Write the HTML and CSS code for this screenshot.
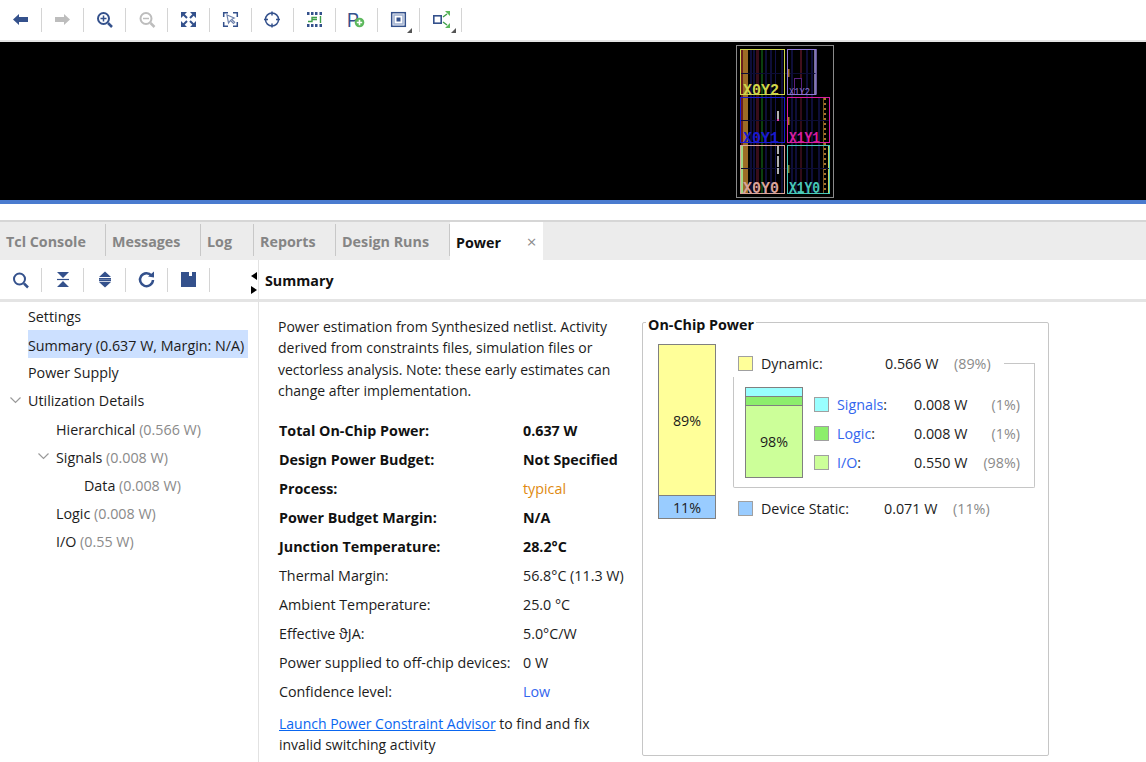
FILE: index.html
```html
<!DOCTYPE html>
<html lang="en">
<head>
  <meta charset="UTF-8">
  <title>Power</title>
  <link rel="stylesheet" href="styles.css">
</head>
<body>
  <div class="toolbar">
    <div class="tool"><svg viewBox="0 0 24 24"><polygon class="navy" points="4,11.5 10,6 10,9 19,9 19,14 10,14 10,17"/></svg></div>
    <div class="tool"><svg viewBox="0 0 24 24"><polygon class="off" points="19,11.5 13,6 13,9 4,9 4,14 13,14 13,17"/></svg></div>
    <div class="tool"><svg viewBox="0 0 24 24"><circle class="line" cx="10.5" cy="10.5" r="5.5" stroke-width="2"/><path class="line" stroke-width="1.5" d="M7.5 10.5h6M10.5 7.5v6"/><path class="line" stroke-width="2.5" d="M15 15l4 4"/></svg></div>
    <div class="tool"><svg viewBox="0 0 24 24"><circle class="line-off" cx="11" cy="10.5" r="5.5" stroke-width="2"/><path class="line-off" stroke-width="1.5" d="M8 10.5h6"/><path class="line-off" stroke-width="2.5" d="M15.5 15l4 4"/></svg></div>
    <div class="tool"><svg viewBox="0 0 24 24"><path class="navy" d="M4 4h6L4 10zM19 4v6L13 4zM4 19v-6l6 6zM19 19h-6l6-6z"/><path class="line" stroke-width="2" d="M6 6l4 4M17 6l-4 4M6 17l4-4M17 17l-4-4"/></svg></div>
    <div class="tool"><svg viewBox="0 0 24 24"><path class="line" stroke-width="1.5" d="M4.7 9V4.7H9M14 4.7h4.3V9M4.7 14v4.3H9M18.3 14v4.3H14"/><path class="line-soft" stroke-width="1.2" d="M8 7l1.5 8 2-2.5 3 3 1.2-1.2-3-3 2.5-1.3z"/></svg></div>
    <div class="tool"><svg viewBox="0 0 24 24"><circle class="line" cx="11" cy="11.5" r="6.5" stroke-width="1.5"/><path class="line" stroke-width="1.5" d="M11 3.5v4M11 15.5v4M3 11.5h4M15 11.5h4"/></svg></div>
    <div class="tool"><svg viewBox="0 0 24 24"><path class="navy" d="M4 4h2.5v3H4zM8 4h2.5v3H8zM12 4h2.5v3H12zM16.5 4H19v3h-2.5zM4 16h2.5v3H4zM8 16h2.5v3H8zM12 16h2.5v3H12zM16.5 16H19v3h-2.5z"/><path class="wire" d="M5 13.5h4v-4h5M9 11.5h5M17.5 8v7"/></svg></div>
    <div class="tool"><svg viewBox="0 0 24 24"><text class="icon-letter" x="2" y="19" textLength="12" lengthAdjust="spacingAndGlyphs">P</text><circle class="green" cx="14.5" cy="14.5" r="4.8"/><path class="plus" d="M11.8 14.5h5.4M14.5 11.8v5.4"/></svg></div>
    <div class="tool"><svg viewBox="0 0 24 24"><rect class="line" x="4.7" y="4.7" width="13.6" height="13.6" stroke-width="1.5"/><rect class="line-pale" x="7" y="7" width="9" height="9" stroke-width="1.5"/><rect class="navy" x="9.5" y="9.5" width="4" height="4"/><polygon class="corner" points="20,25 25,25 25,20"/></svg></div>
    <div class="tool"><svg viewBox="0 0 24 24"><rect class="line" x="4.8" y="7.8" width="7.4" height="7.4" stroke-width="1.6"/><path class="wire" d="M14 9l4-3M14 14l4 3"/><path class="green" d="M16 3h5v5zM16 20h5v-5z"/><polygon class="corner" points="22,25 27,25 27,20"/></svg></div>
  </div>

  <div class="device-view">
    <svg class="device" viewBox="736 45 98 153">
      <rect class="device-edge" x="736.5" y="45.5" width="97" height="152"/>
      <g class="stripes">
        <rect x="741" y="49" width="2" height="96" fill="#6a1c1c"/>
        <rect x="741" y="145" width="2" height="49" fill="#a0d884"/>
        <rect x="743" y="49" width="5" height="145" fill="#9c6c26"/>
        <rect x="750" y="49" width="2" height="145" fill="#0e0e38"/>
        <rect x="753" y="49" width="2" height="145" fill="#0e0e38"/>
        <rect x="756" y="49" width="3" height="145" fill="#380d19"/>
        <rect x="761" y="49" width="2" height="145" fill="#0b3f0e"/>
        <rect x="765" y="49" width="2" height="145" fill="#0e0e38"/>
        <rect x="770" y="49" width="2" height="145" fill="#0e0e38"/>
        <rect x="775" y="49" width="1" height="145" fill="#12124a"/>
        <rect x="781" y="49" width="2" height="145" fill="#0e0e38"/>
        <rect x="791" y="49" width="2" height="145" fill="#0e0e38"/>
        <rect x="795" y="97" width="2" height="97" fill="#0e0e38"/>
        <rect x="800" y="49" width="2" height="29" fill="#42101d"/>
        <rect x="800" y="97" width="2" height="97" fill="#320c18"/>
        <rect x="806" y="49" width="2" height="145" fill="#0e0e38"/>
        <rect x="811" y="49" width="2" height="145" fill="#0e0e38"/>
        <rect x="818" y="97" width="2" height="97" fill="#0e0e38"/>
        <rect x="823" y="98" width="1" height="95" fill="#7a5820"/>
        <line class="device-dots" x1="825" y1="98" x2="825" y2="193"/>
        <rect x="828" y="146" width="1" height="47" fill="#c8d860"/>
        <rect x="814" y="49" width="2.5" height="45" fill="#777099"/>
        <rect x="740" y="73" width="76" height="1" fill="#0c0c34"/>
        <rect x="740" y="120" width="90" height="1" fill="#0c0c34"/>
        <rect x="740" y="168" width="90" height="1" fill="#0c0c34"/>
        <rect x="788" y="69" width="1.5" height="8" fill="#a8752a"/>
        <rect x="788" y="117" width="1.5" height="8" fill="#a8752a"/>
        <rect x="788" y="165" width="1.5" height="8" fill="#7d8030"/>
        <rect x="794.5" y="78.5" width="7" height="16" fill="#000" stroke="#5a2280"/>
        <rect x="777" y="111" width="2" height="9" fill="#b0b0b0"/>
        <rect x="777" y="119" width="2" height="2" fill="#e040a0"/>
        <rect x="777" y="146" width="2" height="8" fill="#b0b0b0"/>
        <rect x="777" y="156" width="2" height="11" fill="#b0b0b0"/>
        <rect x="777" y="168" width="2" height="6" fill="#b0b0b0"/>
      </g>
      <rect class="clock-region" x="740.5" y="49.5" width="44" height="45" stroke="#cfd64a"/>
      <rect class="clock-region" x="787.5" y="49.5" width="28.5" height="45" stroke="#8f78d8"/>
      <rect class="clock-region" x="740.5" y="97.5" width="44" height="45" stroke="#1a1ad0"/>
      <rect class="clock-region" x="787.5" y="97.5" width="42" height="45" stroke="#d81ca0"/>
      <rect class="clock-region" x="740.5" y="145.5" width="44" height="48" stroke="#d9a49a"/>
      <rect class="clock-region" x="787.5" y="145.5" width="42" height="48" stroke="#48c8b8"/>
      <text class="clock-label" x="743" y="94.5" textLength="36" lengthAdjust="spacingAndGlyphs" fill="#cfd64a">X0Y2</text>
      <text class="clock-label small" x="789" y="95" textLength="21" lengthAdjust="spacingAndGlyphs" fill="#8f78d8">X1Y2</text>
      <text class="clock-label" x="743" y="143" textLength="36" lengthAdjust="spacingAndGlyphs" fill="#1a1ad0">X0Y1</text>
      <text class="clock-label" x="789" y="143" textLength="31" lengthAdjust="spacingAndGlyphs" fill="#d81ca0">X1Y1</text>
      <text class="clock-label" x="743" y="192.5" textLength="36" lengthAdjust="spacingAndGlyphs" fill="#d9a49a">X0Y0</text>
      <text class="clock-label" x="789" y="192.5" textLength="31" lengthAdjust="spacingAndGlyphs" fill="#48c8b8">X1Y0</text>
    </svg>
  </div>

  <div class="tabs">
    <div class="tab">Tcl Console</div>
    <div class="tab">Messages</div>
    <div class="tab">Log</div>
    <div class="tab">Reports</div>
    <div class="tab">Design Runs</div>
    <div class="tab tab-active">Power <span class="tab-close">×</span></div>
  </div>

  <div class="panel">
    <div class="side">
      <div class="subbar">
        <div class="tool"><svg viewBox="0 0 24 24"><circle class="line" cx="10.5" cy="11" r="5.5" stroke-width="2"/><path class="line" stroke-width="2.5" d="M15 15.5l4 4"/></svg></div>
        <div class="tool"><svg viewBox="0 0 24 24"><path class="navy" d="M6 4h12l-6 6zM12 13l6 6H6z"/><path class="line" stroke-width="1.2" d="M6 11.5h12"/></svg></div>
        <div class="tool"><svg viewBox="0 0 24 24"><path class="navy" d="M12 3.5l6 5.5H6zM6 14h12l-6 5.5z"/><path class="line" stroke-width="1.4" d="M6 10.7h12M6 12.5h12"/></svg></div>
        <div class="tool"><svg viewBox="0 0 24 24"><path class="line" stroke-width="2.5" d="M16.5 7.5a6.5 6.5 0 1 0 1.5 4.5"/><polygon class="navy" points="13,8.5 19,3.5 19,9.5"/></svg></div>
        <div class="tool"><svg viewBox="0 0 24 24"><path class="navy" d="M4 4h15v15H4zM12 4v4h3V4z" fill-rule="evenodd"/></svg></div>
        <span class="splitter"><i class="split-left"></i><i class="split-right"></i></span>
      </div>
      <ul class="tree">
        <li class="node"><span class="node-text">Settings</span></li>
        <li class="node"><span class="node-text node-selected">Summary (0.637 W, Margin: N/A)</span></li>
        <li class="node"><span class="node-text">Power Supply</span></li>
        <li class="node"><svg class="chevron" viewBox="0 0 18 28"><path d="M0.5 11.5l5 5 5-5"/></svg><span class="node-text">Utilization Details</span></li>
        <li class="node level-1"><span class="node-text">Hierarchical <em>(0.566 W)</em></span></li>
        <li class="node level-1"><svg class="chevron" viewBox="0 0 18 28"><path d="M0.5 11.5l5 5 5-5"/></svg><span class="node-text">Signals <em>(0.008 W)</em></span></li>
        <li class="node level-2"><span class="node-text">Data <em>(0.008 W)</em></span></li>
        <li class="node level-1"><span class="node-text">Logic <em>(0.008 W)</em></span></li>
        <li class="node level-1"><span class="node-text">I/O <em>(0.55 W)</em></span></li>
      </ul>
    </div>

    <div class="main">
      <h2 class="main-title">Summary</h2>
      <div class="content">
        <div class="details">
          <p class="intro">Power estimation from Synthesized netlist. Activity<br>derived from constraints files, simulation files or<br>vectorless analysis. Note: these early estimates can<br>change after implementation.</p>
          <dl class="facts">
            <dt class="strong">Total On-Chip Power:</dt><dd class="strong">0.637 W</dd>
            <dt class="strong">Design Power Budget:</dt><dd class="strong">Not Specified</dd>
            <dt class="strong">Process:</dt><dd class="orange">typical</dd>
            <dt class="strong">Power Budget Margin:</dt><dd class="strong">N/A</dd>
            <dt class="strong">Junction Temperature:</dt><dd class="strong">28.2°C</dd>
            <dt>Thermal Margin:</dt><dd>56.8°C (11.3 W)</dd>
            <dt>Ambient Temperature:</dt><dd>25.0 °C</dd>
            <dt>Effective ϑJA:</dt><dd>5.0°C/W</dd>
            <dt>Power supplied to off-chip devices:</dt><dd>0 W</dd>
            <dt>Confidence level:</dt><dd class="blue">Low</dd>
          </dl>
          <p class="advisor"><a href="#">Launch Power Constraint Advisor</a> to find and fix<br>invalid switching activity</p>
        </div>

        <section class="onchip">
          <div class="onchip-title">On-Chip Power</div>
          <div class="onchip-body">
            <div class="bar bar-total">
              <div class="seg seg-dynamic">89%</div>
              <div class="seg seg-static">11%</div>
            </div>
            <div class="legend">
              <div class="row">
                <span class="swatch seg-dynamic"></span><span class="name">Dynamic:</span><span class="val">0.566 W</span><span class="pct">(89%)</span>
              </div>
              <div class="group">
                <div class="bar bar-dynamic">
                  <div class="seg seg-signals"></div>
                  <div class="seg seg-logic"></div>
                  <div class="seg seg-io">98%</div>
                </div>
                <div class="group-rows">
                  <div class="row">
                    <span class="swatch seg-signals"></span><span class="name name-sub"><a class="plain" href="#">Signals</a>:</span><span class="val val-sub">0.008 W</span><span class="pct pct-sub">(1%)</span>
                  </div>
                  <div class="row">
                    <span class="swatch seg-logic"></span><span class="name name-sub"><a class="plain" href="#">Logic</a>:</span><span class="val val-sub">0.008 W</span><span class="pct pct-sub">(1%)</span>
                  </div>
                  <div class="row">
                    <span class="swatch seg-io"></span><span class="name name-sub"><a class="plain" href="#">I/O</a>:</span><span class="val val-sub">0.550 W</span><span class="pct pct-sub">(98%)</span>
                  </div>
                </div>
              </div>
              <div class="row row-static">
                <span class="swatch seg-static"></span><span class="name name-static">Device Static:</span><span class="val">0.071 W</span><span class="pct">(11%)</span>
              </div>
            </div>
          </div>
        </section>
      </div>
    </div>
  </div>
</body>
</html>
```

FILE: styles.css
```css
body {
  font-family: "Open Sans", "Noto Sans", sans-serif;
  font-size: 14.3px;
  color: #1c1c1c;
  background-color: #fff;
  margin: 0;
  width: 1146px;
  height: 762px;
  overflow: hidden;
}

svg {
  overflow: visible;
}

/* icon paints */
.navy { fill: #34518c; }
.off { fill: #bdbdbd; }
.green { fill: #5cb85c; }
.corner { fill: #555; }
.line { fill: none; stroke: #34518c; }
.line-off { fill: none; stroke: #bdbdbd; }
.line-soft { fill: #fff; stroke: #6f83ad; }
.line-pale { fill: #fff; stroke: #9fb0d0; }
.wire { fill: none; stroke: #3f9d4a; stroke-width: 1.4; }
.plus { fill: none; stroke: #fff; stroke-width: 1.6; }
.icon-letter {
  font-family: "Liberation Sans", sans-serif;
  font-size: 21px;
  fill: #34518c;
}

/* top toolbar */
.toolbar {
  display: flex;
  height: 40px;
  align-items: center;
  border-bottom: 2px solid #e4e4e4;
}

.tool {
  width: 42px;
  height: 24px;
  box-sizing: border-box;
  padding-left: 9px;
  border-right: 1px solid #d4d4d4;
  flex: none;
}

.tool svg {
  display: block;
  width: 24px;
  height: 24px;
}

/* device */
.device-view {
  height: 155px;
  background-color: #000;
  border-bottom: 4px solid #4a7bcf;
  padding-left: 736px;
  padding-top: 3px;
}

.device {
  display: block;
  width: 98px;
  height: 153px;
}

.device-edge {
  fill: none;
  stroke: #8a8a8a;
}

.device-dots {
  stroke: #a8752a;
  stroke-width: 2;
  stroke-dasharray: 2 3;
}

.clock-region {
  fill: none;
  stroke-width: 1;
}

.clock-label {
  font-family: "Liberation Mono", monospace;
  font-size: 16px;
  font-weight: 700;
}

.clock-label.small {
  font-size: 10px;
  font-weight: 400;
}

/* tabs */
.tabs {
  display: grid;
  grid-template-columns: 106px 95px 53px 82px 114px 93px;
  height: 38px;
  margin-top: 16px;
  border-top: 2px solid #d6d6d6;
  background-color: #ececec;
}

.tab {
  font-weight: 700;
  color: #858585;
  padding-left: 6px;
  white-space: nowrap;
  border-right: 1px solid #c8c8c8;
  height: 32px;
  margin-top: 2px;
  line-height: 36px;
}

.tab-active {
  background-color: #fff;
  color: #111;
  border-right: none;
  height: 38px;
  margin-top: 0;
  line-height: 40px;
}

.tab-close {
  font-weight: 400;
  font-size: 17px;
  color: #8c8c8c;
  margin-left: 22px;
}

/* panel */
.panel {
  display: flex;
  height: 502px;
}

.side {
  width: 258px;
  flex: none;
  border-right: 1px solid #e2e2e2;
}

.subbar {
  display: flex;
  align-items: center;
  height: 39px;
  border-bottom: 3px solid #e4e4e4;
  position: relative;
}

.splitter i {
  position: absolute;
  left: 251px;
  width: 0;
  height: 0;
  border-top: 4.5px solid transparent;
  border-bottom: 4.5px solid transparent;
}

.split-left {
  top: 12px;
  border-right: 6px solid #000;
}

.split-right {
  top: 26px;
  border-left: 6px solid #000;
}

.tree {
  list-style: none;
  margin: 0;
  padding: 0;
}

.node {
  display: flex;
  align-items: center;
  height: 28px;
  padding-left: 28px;
}

.level-1 { padding-left: 56px; }
.level-2 { padding-left: 84px; }

.chevron {
  width: 18px;
  height: 28px;
  margin-left: -18px;
  flex: none;
}

.chevron path {
  fill: none;
  stroke: #9a9a9a;
  stroke-width: 1.2;
}

.node-text {
  white-space: nowrap;
  height: 28px;
  line-height: 29px;
}

.level-1 .node-text,
.level-2 .node-text {
  line-height: 32px;
}

.node-text em {
  font-style: normal;
  color: #8a8a8a;
}

.node-selected {
  width: 220px;
  line-height: 31px;
  background-color: #cce0ff;
}

.main {
  flex: 1;
  min-width: 0;
}

.main-title {
  margin: 0;
  height: 39px;
  line-height: 41px;
  padding-left: 6px;
  font-size: 14.3px;
  font-weight: 700;
  color: #111;
  border-bottom: 3px solid #e4e4e4;
}

.content {
  display: flex;
}

.details {
  width: 383px;
  flex: none;
  box-sizing: border-box;
  padding: 14px 0 0 19px;
}

.intro {
  margin: 0;
  font-size: 14px;
  line-height: 21.3px;
}

.facts {
  display: grid;
  grid-template-columns: 244px 1fr;
  grid-auto-rows: 29px;
  align-items: center;
  margin: 15px 0 0 1px;
  white-space: nowrap;
}

.facts dd {
  margin: 0;
}

.strong {
  font-weight: 700;
  color: #111;
}

.orange { color: #e08a10; }
.blue { color: #3366ee; }

.advisor {
  margin: 7px 0 0 1px;
  font-size: 14px;
  line-height: 21px;
}

.advisor a {
  color: #0a66f0;
}

/* on-chip power box */
.onchip {
  width: 407px;
  height: 434px;
  box-sizing: border-box;
  margin-top: 20px;
  border: 1px solid #c6c6c6;
  border-radius: 2px;
}

.onchip-title {
  width: max-content;
  margin: -7px 0 0 3px;
  padding: 0 2px;
  height: 18px;
  line-height: 18px;
  font-weight: 700;
  color: #111;
  background-color: #fff;
}

.onchip-body {
  display: flex;
  padding: 10px 0 0 15px;
}

.bar {
  width: 58px;
  box-sizing: border-box;
  border: 1px solid #808080;
  display: flex;
  flex-direction: column;
  flex: none;
}

.bar-total {
  height: 175px;
}

.seg {
  display: flex;
  align-items: center;
  justify-content: center;
}

.bar-total .seg-dynamic {
  height: 150px;
}

.bar-total .seg-static {
  flex: 1;
  border-top: 1px solid #808080;
}

.seg-dynamic { background-color: #ffff99; }
.seg-static { background-color: #99ccff; }
.seg-signals { background-color: #99ffff; }
.seg-logic { background-color: #8cee6c; }
.seg-io { background-color: #ccff99; }

.legend {
  margin: 5px 0 0 22px;
  width: 297px;
}

.row {
  display: flex;
  align-items: center;
  height: 29px;
  white-space: nowrap;
}

.swatch {
  width: 15px;
  height: 15px;
  box-sizing: border-box;
  border: 1px solid #a0a0a0;
  flex: none;
  margin-right: 8px;
}

.name { width: 124px; }
.name-static { width: 123px; }
.name-sub { width: 77px; }
.val { width: 69px; }
.val-sub { width: 53px; }
.pct { color: #8a8a8a; }

.pct-sub {
  width: 53px;
  text-align: right;
}

.plain {
  color: #3366ee;
  text-decoration: none;
}

.group {
  display: flex;
  position: relative;
  margin: -1px 0 0 -5px;
  width: 302px;
  box-sizing: border-box;
  height: 111px;
  padding: 10px 0 0 11px;
  border: 1px solid #c6c6c6;
  border-top: none;
  border-radius: 0 0 2px 2px;
}

/* connector from the Dynamic row down into the box */
.group::before {
  content: "";
  position: absolute;
  right: -1px;
  top: -14px;
  width: 30px;
  height: 14px;
  border-top: 1px solid #c6c6c6;
  border-right: 1px solid #c6c6c6;
}

.bar-dynamic {
  height: 91px;
}

.bar-dynamic .seg-signals {
  height: 8px;
  border-bottom: 1px solid #808080;
}

.bar-dynamic .seg-logic {
  height: 8px;
  border-bottom: 1px solid #808080;
}

.bar-dynamic .seg-io {
  flex: 1;
}

.group-rows {
  margin: 3px 0 0 11px;
}

.row-static {
  margin-top: 6px;
}
```
